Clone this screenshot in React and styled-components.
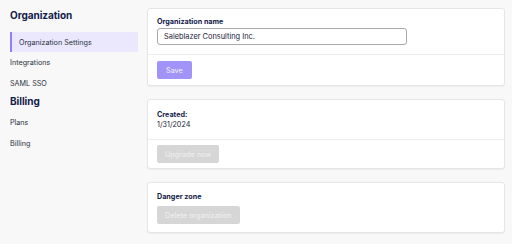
import styled, { createGlobalStyle } from "styled-components";

const GlobalStyle = createGlobalStyle`
  body {
    margin: 0;
    background: #f8f8f8;
    font-family: Inter, "Liberation Sans", sans-serif;
    color: #1a2238;
  }
`;

const Page = styled.div`
  display: flex;
  gap: 9px;
  padding: 8px 7px 0 10px;
  height: 244px;
  box-sizing: border-box;
`;

const Sidebar = styled.nav`
  width: 128px;
  display: flex;
  flex-direction: column;
`;

const SideHeading = styled.h2`
  margin: 0;
  font-size: 10px;
  letter-spacing: -0.05px;
  font-weight: 700;
  color: #13204a;
  line-height: 15px;
  height: ${(p) => p.$h || 24}px;
`;

const SideItem = styled.div`
  height: ${(p) => (p.$active ? 20 : 21)}px;
  display: flex;
  align-items: center;
  font-size: 7.2px;
  color: #2a2f3d;
  padding-left: ${(p) => (p.$active ? "7px" : "0")};
  background: ${(p) => (p.$active ? "#ebe8fd" : "transparent")};
  border-left: ${(p) => (p.$active ? "2px solid #8f80f5" : "none")};
`;

const Main = styled.main`
  flex: 1;
  display: flex;
  flex-direction: column;
  gap: 13px;
`;

const Card = styled.section`
  background: #fff;
  border: 1px solid #e6e6e6;
  border-radius: 3px;
  box-shadow: 0 1px 1px rgba(0, 0, 0, 0.05);
`;

const Section = styled.div`
  padding: ${(p) => p.$pad || "8px 9px 9px"};
  border-top: ${(p) => (p.$divided ? "1px solid #ececec" : "none")};
  display: flex;
  flex-direction: column;
  align-items: flex-start;
`;

const Label = styled.div`
  font-size: 7.2px;
  font-weight: 700;
  color: #13204a;
  line-height: 10px;
`;

const Value = styled.div`
  font-size: 7.2px;
  color: #1a2238;
  line-height: 10px;
`;

const Input = styled.input`
  width: 250px;
  height: 17px;
  box-sizing: border-box;
  margin-top: 1px;
  border: 1px solid #a9a9a9;
  border-radius: 3px;
  padding: 0 6px;
  font-family: inherit;
  font-size: 7.4px;
  color: #1a2238;
  outline: none;
`;

const Button = styled.button`
  height: 18px;
  padding: 0 ${(p) => p.$px || 8}px;
  margin-top: ${(p) => p.$mt || 0}px;
  border: none;
  border-radius: 2px;
  font-family: inherit;
  font-size: 7.2px;
  font-weight: 500;
  color: ${(p) => (p.$primary ? "#e7e3ff" : "#ededed")};
  background: ${(p) => (p.$primary ? "#a194f8" : "#d6d6d6")};
`;

export default function App() {
  return (
    <>
      <GlobalStyle />
      <Page>
        <Sidebar>
          <SideHeading $h={24}>Organization</SideHeading>
          <SideItem $active>Organization Settings</SideItem>
          <SideItem>Integrations</SideItem>
          <SideItem>SAML SSO</SideItem>
          <SideHeading $h={18}>Billing</SideHeading>
          <SideItem>Plans</SideItem>
          <SideItem>Billing</SideItem>
        </Sidebar>
        <Main>
          <Card>
            <Section>
              <Label>Organization name</Label>
              <Input defaultValue="Saleblazer Consulting Inc." />
            </Section>
            <Section $divided $pad="6px 9px 6px">
              <Button $primary $px={9}>Save</Button>
            </Section>
          </Card>
          <Card>
            <Section $pad="10px 9px 9px">
              <Label>Created:</Label>
              <Value>1/31/2024</Value>
            </Section>
            <Section $divided $pad="5px 9px 5px">
              <Button>Upgrade now</Button>
            </Section>
          </Card>
          <Card>
            <Section $pad="9px 9px 8px">
              <Label>Danger zone</Label>
              <Button $mt={4}>Delete organization</Button>
            </Section>
          </Card>
        </Main>
      </Page>
    </>
  );
}
